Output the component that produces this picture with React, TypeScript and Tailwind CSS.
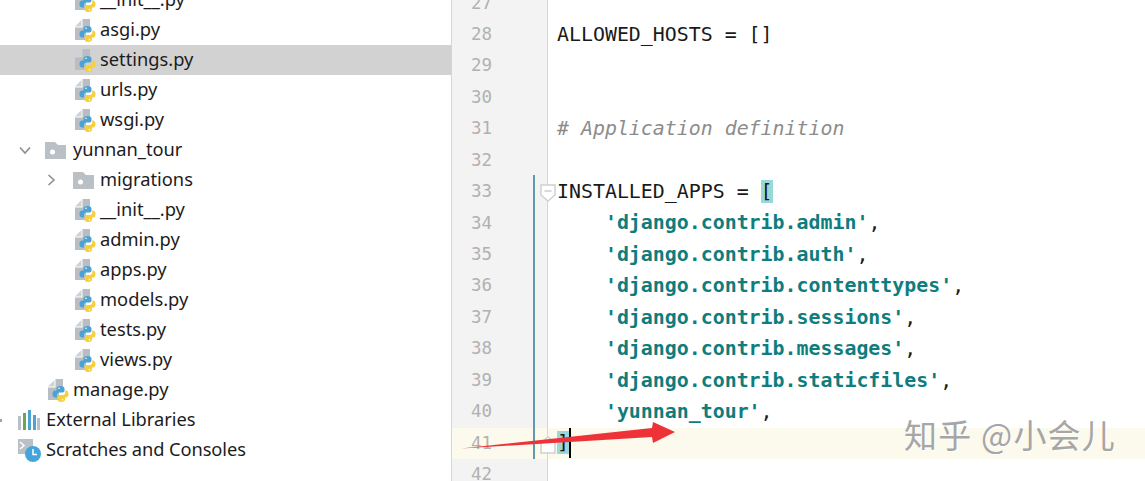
const treeFont = { fontFamily: '"Noto Sans", "Liberation Sans", sans-serif' }

function PyIcon() {
  return (
    <svg width="22" height="23" viewBox="0 0 22 23" className="shrink-0">
      <path d="M1 7.500L7.500 1V7.500z" fill="#cfd3d6" />
      <path d="M8.500 0H16V10H12V21H1V8.500H8.500z" fill="#b8bec3" />
      <path d="M13.500 7c-3 0-4 1-4 2.500V11.500H8C6.500 11.500 5.500 13 5.500 15S6.500 18.500 8 18.500H10v-2.500c0-1.500 1-2.500 2.500-2.500h3c1.300 0 2-1 2-2V9.500C17.500 8 16 7 13.500 7z" fill="#4aa3d3" />
      <path d="M14 23c3 0 4-1 4-2.500V18.500h1.500c1 0 2-1.500 2-3.500S20.500 11.500 19 11.500H18.300v2c0 1.500-1 2.500-2.500 2.500h-3c-1.300 0-2 1-2 2v2.500C10.800 22 11.500 23 14 23z" fill="#f6cf3d" />
      <circle cx="12" cy="9.300" r="0.800" fill="#fff" />
      <circle cx="15.500" cy="20.700" r="0.800" fill="#fff" />
    </svg>
  )
}

function FolderIcon() {
  return (
    <svg width="21" height="17" viewBox="0 0 21 17" className="shrink-0">
      <path d="M0 0H10L13 3H21V17H0z" fill="#b9c1c7" />
      <circle cx="7.500" cy="10" r="2.500" fill="#fff" />
    </svg>
  )
}

function Chevron({ open }: { open: boolean }) {
  return (
    <svg width="14" height="14" viewBox="0 0 14 14" className="shrink-0">
      <path d={open ? 'M2 4.500L7 10L12 4.500' : 'M4.500 2L10 7L4.500 12'} fill="none" stroke="#8b8f93" strokeWidth="1.600" />
    </svg>
  )
}

function Row({ pad, selected, children }: { pad: string; selected?: boolean; children: React.ReactNode }) {
  return (
    <div className={`flex h-[30px] items-center text-[18.300px] text-[#1c1c1c] ${pad} ${selected ? 'bg-[#d2d2d2]' : ''}`}>
      {children}
    </div>
  )
}

function Label({ children, className = '' }: { children: string; className?: string }) {
  return <span className={`-translate-y-[1px] ${className}`}>{children}</span>
}

function PyRow({ name, pad = 'pl-[74px]', gap = 'gap-[4px]', selected }: { name: string; pad?: string; gap?: string; selected?: boolean }) {
  return (
    <Row pad={pad} selected={selected}>
      <div className={`flex items-center ${gap}`}>
        <PyIcon />
        <Label>{name}</Label>
      </div>
    </Row>
  )
}

function Sidebar() {
  return (
    <div className="-mt-[15px] w-[451px] shrink-0" style={treeFont}>
      <PyRow name="__init__.py" />
      <PyRow name="asgi.py" />
      <PyRow name="settings.py" selected />
      <PyRow name="urls.py" />
      <PyRow name="wsgi.py" />
      <Row pad="pl-[18px]">
        <div className="flex items-center">
          <Chevron open />
          <div className="ml-[13px]"><FolderIcon /></div>
          <Label className="ml-[7px]">yunnan_tour</Label>
        </div>
      </Row>
      <Row pad="pl-[44px]">
        <div className="flex items-center">
          <Chevron open={false} />
          <div className="ml-[15px]"><FolderIcon /></div>
          <Label className="ml-[6px]">migrations</Label>
        </div>
      </Row>
      <PyRow name="__init__.py" />
      <PyRow name="admin.py" />
      <PyRow name="apps.py" />
      <PyRow name="models.py" />
      <PyRow name="tests.py" />
      <PyRow name="views.py" />
      <PyRow name="manage.py" pad="pl-[47px]" gap="gap-[4px]" />
      <Row pad="pl-[18px]">
        <div className="flex items-center gap-[6px]">
          <svg width="22" height="20" viewBox="0 0 22 20" className="shrink-0">
            <rect x="0" y="6" width="3" height="14" fill="#b9c1c7" />
            <rect x="5" y="3" width="3" height="17" fill="#6aa84f" />
            <rect x="10" y="0" width="3" height="20" fill="#4aa3d3" />
            <rect x="15" y="5" width="3" height="15" fill="#4aa3d3" />
            <rect x="19" y="8" width="3" height="12" fill="#b9c1c7" />
          </svg>
          <Label>External Libraries</Label>
        </div>
      </Row>
      <Row pad="pl-[18px]">
        <div className="flex items-center gap-[5px]">
          <svg width="23" height="23" viewBox="0 0 23 23" className="shrink-0">
            <path d="M0 0H15V8L8 15H0z" fill="#b9c1c7" />
            <path d="M2 3L6 6.500L2 10" fill="none" stroke="#fff" strokeWidth="1.500" />
            <circle cx="15" cy="15" r="8" fill="#43a5dc" />
            <path d="M15 10V15.500H19" fill="none" stroke="#fff" strokeWidth="1.500" />
          </svg>
          <Label className="tracking-[-0.090px]">Scratches and Consoles</Label>
        </div>
      </Row>
    </div>
  )
}

function Str({ children }: { children: string }) {
  return <span className="font-bold text-[#0f7d7d]">{children}</span>
}

function Match({ children }: { children: string }) {
  return <span className="bg-[#99d8d8]">{children}</span>
}

function Line({ n, current, children }: { n: number; current?: boolean; children?: React.ReactNode }) {
  return (
    <div className={`flex h-[31.45px] items-center ${current ? 'bg-[#fcfaed]' : ''}`}>
      <div className={`h-full w-[97px] shrink-0 border-r border-l border-[#d6d6d6] pl-[19px] text-[17.500px] leading-[31.45px] text-[#b1b1b1] ${current ? '' : 'bg-[#f3f3f3]'}`}>
        {n}
      </div>
      <div className="whitespace-pre pl-[9px] text-[#1a1a1a]">{children}</div>
    </div>
  )
}

function FoldMark({ top }: { top: string }) {
  return (
    <svg width="16" height="18" viewBox="0 0 16 18" className={`absolute left-[540px] ${top}`}>
      <path d="M1 1H15V11L8 17L1 11z" fill="#fff" stroke="#d0d0d0" strokeWidth="1.500" />
      <path d="M4.500 7H11.500" stroke="#c0c0c0" strokeWidth="1.200" />
    </svg>
  )
}

export default function App() {
  return (
    <div className="relative flex h-[481px] w-[1145px] overflow-hidden bg-white">
      <Sidebar />
      <div
        className="-mt-[12.500px] min-w-0 flex-1 text-[19.900px]"
        style={{ fontFamily: '"DejaVu Sans Mono", "Liberation Mono", monospace' }}
      >
        <Line n={27} />
        <Line n={28}>ALLOWED_HOSTS = []</Line>
        <Line n={29} />
        <Line n={30} />
        <Line n={31}><span className="text-[#8c8c8c] italic"># Application definition</span></Line>
        <Line n={32} />
        <Line n={33}>INSTALLED_APPS = <Match>[</Match></Line>
        <Line n={34}>    <Str>'django.contrib.admin'</Str>,</Line>
        <Line n={35}>    <Str>'django.contrib.auth'</Str>,</Line>
        <Line n={36}>    <Str>'django.contrib.contenttypes'</Str>,</Line>
        <Line n={37}>    <Str>'django.contrib.sessions'</Str>,</Line>
        <Line n={38}>    <Str>'django.contrib.messages'</Str>,</Line>
        <Line n={39}>    <Str>'django.contrib.staticfiles'</Str>,</Line>
        <Line n={40}>    <Str>'yunnan_tour'</Str>,</Line>
        <Line n={41} current>
          <span className="relative inline-block">
            <Match>]</Match>
            <span className="absolute top-0 -right-[2px] h-full w-[2px] bg-black" />
          </span>
        </Line>
        <Line n={42} />
      </div>

      {/* method line + fold markers sit over the gutter */}
      <div className="absolute top-[175px] left-[533px] h-[284px] w-[1.500px] bg-[#5f9cab]" />
      <FoldMark top="top-[184px]" />
      <svg width="16" height="18" viewBox="0 0 16 18" className="absolute top-[436px] left-[540px]">
        <path d="M1 17H15V7L8 1L1 7z" fill="#fff" stroke="#d0d0d0" strokeWidth="1.500" />
      </svg>

      {/* cut-off tree arrow at the window edge */}
      <div className="absolute top-[419px] left-0 h-[3px] w-[2px] bg-[#a0a4a8]" />

      {/* screenshot annotation */}
      <svg width="240" height="40" viewBox="0 0 240 40" className="absolute top-[418px] left-[455px]">
        <path d="M6 30.500L197 10L198 4L220 14L198 25L197 19z" fill="#ee3338" />
      </svg>

      <div
        className="absolute top-[412px] left-[904px] text-[33px] leading-[44px] tracking-[1.200px] whitespace-nowrap text-[#a6a6a6] [text-shadow:1px_1px_0_#fff]"
        style={{ fontFamily: '"Noto Sans CJK SC", "Noto Sans", sans-serif' }}
      >
        知乎 @小会儿
      </div>
    </div>
  )
}
